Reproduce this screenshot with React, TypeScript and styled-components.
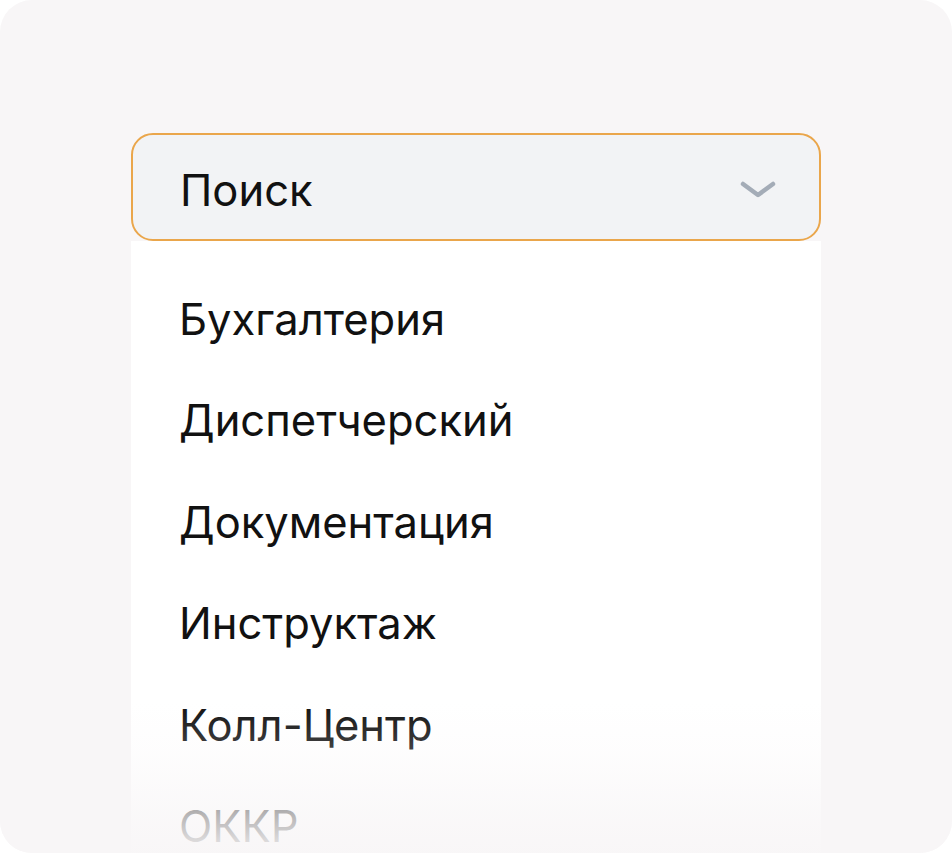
import styled, { createGlobalStyle } from "styled-components";

const GlobalStyle = createGlobalStyle`
  body {
    margin: 0;
    background: #ffffff;
    font-family: Inter, "Noto Sans", sans-serif;
  }
`;

const Card = styled.div`
  position: relative;
  width: 952px;
  height: 853px;
  box-sizing: border-box;
  padding: 133px 131px 0;
  background: #f8f6f7;
  border-radius: 32px;
  overflow: hidden;
`;

const Dropdown = styled.div`
  display: flex;
  flex-direction: column;
  width: 690px;
`;

const Select = styled.div`
  display: flex;
  align-items: center;
  justify-content: space-between;
  height: 108px;
  box-sizing: border-box;
  padding: 5px 43px 0 47px;
  background: #f2f3f5;
  border: 2px solid #eaa64b;
  border-radius: 22px;
  font-size: 43.5px;
  color: #111111;
`;

const List = styled.ul`
  list-style: none;
  margin: 0;
  padding: 28px 0 0;
  background: #ffffff;
  height: 700px;
`;

const Item = styled.li`
  height: 101.5px;
  display: flex;
  align-items: center;
  padding-left: 48px;
  font-size: 43.5px;
  line-height: 1.1;
  color: #111111;
`;

const Fade = styled.div`
  position: absolute;
  left: 0;
  right: 0;
  bottom: 0;
  height: 150px;
  background: linear-gradient(
    to bottom,
    rgba(248, 246, 247, 0) 0%,
    rgba(248, 246, 247, 0.2) 30%,
    rgba(248, 246, 247, 0.72) 75%,
    rgba(248, 246, 247, 0.95) 100%
  );
  pointer-events: none;
`;

const items = [
  "Бухгалтерия",
  "Диспетчерский",
  "Документация",
  "Инструктаж",
  "Колл-Центр",
  "ОККР",
];

export default function App() {
  return (
    <>
      <GlobalStyle />
      <Card>
        <Dropdown>
          <Select>
            <span>Поиск</span>
            <svg width="36" height="20" viewBox="0 0 36 20" fill="none">
              <path
                d="M3 4l15 11L33 4"
                stroke="#a4acb7"
                strokeWidth="4.5"
                strokeLinecap="round"
                strokeLinejoin="round"
              />
            </svg>
          </Select>
          <List>
            {items.map((item) => (
              <Item key={item}>{item}</Item>
            ))}
          </List>
        </Dropdown>
        <Fade />
      </Card>
    </>
  );
}
